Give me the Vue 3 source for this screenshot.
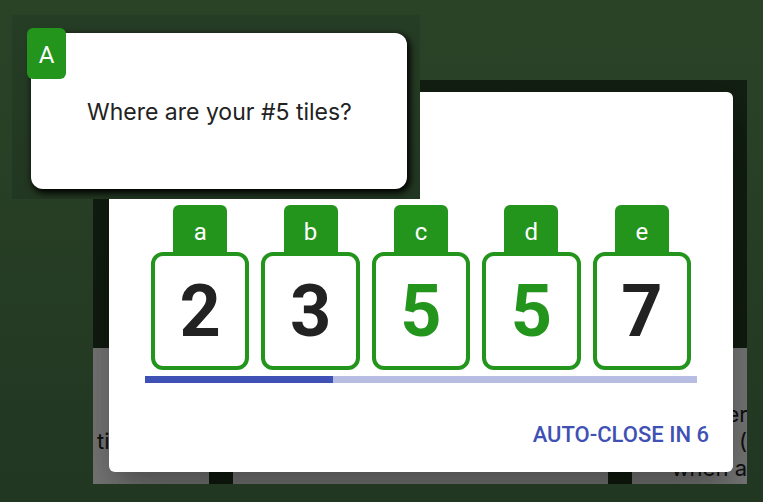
<script setup>
import { ref } from 'vue'

const tiles = [
  { slot: 'a', value: 2 },
  { slot: 'b', value: 3 },
  { slot: 'c', value: 5 },
  { slot: 'd', value: 5 },
  { slot: 'e', value: 7 },
]
const asked = 5
const seconds = ref(6)
const progress = ref(34)
</script>

<template>
  <main class="page">
    <section class="scene">
      <div class="board">
        <article class="board-card left"><p>ti</p></article>
        <article class="board-card"></article>
        <article class="board-card right">
          <p class="overhang">ere</p>
          <p>(</p>
          <p>when a</p>
        </article>
      </div>
      <div class="shade"></div>
      <div class="dialog" role="dialog" aria-label="Answer">
        <ul class="tiles">
          <li v-for="tile in tiles" :key="tile.slot" class="tile">
            <span class="tab">{{ tile.slot }}</span>
            <strong class="face" :class="{ match: tile.value === asked }">{{ tile.value }}</strong>
          </li>
        </ul>
        <div class="track" role="progressbar" aria-label="Time elapsed" :aria-valuenow="progress">
          <div class="bar" :style="{ width: progress + '%' }"></div>
        </div>
        <footer class="actions">
          <button type="button" class="close">AUTO-CLOSE IN {{ seconds }}</button>
        </footer>
      </div>
    </section>

    <aside class="question">
      <div class="question-card">
        <span class="badge">A</span>
        <p>Where are your #5 tiles?</p>
      </div>
    </aside>
  </main>
</template>

<style>
body {
  margin: 0;
  background: #233822;
}
</style>

<style scoped>
.page {
  position: relative;
  box-sizing: border-box;
  min-height: 100vh;
  padding: 80px 16px 18px 93px;
  background: linear-gradient(#2a4226, #284026 30%, #233822 85%, #223721);
  color: #222;
  font-family: Roboto, "Liberation Sans", sans-serif;
  font-size: 24px;
  line-height: 28px;
}

p {
  margin: 0;
}

.scene {
  display: grid;
  overflow: hidden;
}

.scene > * {
  grid-area: 1 / 1;
}

.board {
  display: grid;
  grid-template-columns: 116px 1fr 115px;
  column-gap: 24px;
  padding-top: 268px;
  background: linear-gradient(#284026, #223721);
}

.board-card {
  overflow: hidden;
  background: #f4f4f4;
  font-family: Inter, Roboto, sans-serif;
  font-size: 22px;
  line-height: 27px;
  white-space: nowrap;
}

.left {
  padding: 80px 0 0 4px;
}

.right {
  padding-top: 53px;
  text-align: right;
}

.overhang {
  margin-right: -13px;
}

.shade {
  background: rgba(0, 0, 0, 0.5);
}

.dialog {
  display: flex;
  flex-direction: column;
  margin: 12px 14px 12px 16px;
  padding: 113px 36px 12px;
  border-radius: 6px;
  background: #fff;
  box-shadow: 0 16px 22px -10px rgba(0, 0, 0, 0.2), 0 36px 57px 4px rgba(0, 0, 0, 0.14), 0 14px 69px 12px rgba(0, 0, 0, 0.12);
}

.tiles {
  display: grid;
  grid-template-columns: repeat(5, 1fr);
  margin: 0;
  padding: 0;
  list-style: none;
}

.tile {
  display: flex;
  flex-direction: column;
  align-items: center;
  padding: 0 6px;
}

.tab {
  width: 54px;
  padding: 13px 0 6px;
  border-radius: 6px 6px 0 0;
  background: #23941c;
  color: #fff;
  text-align: center;
}

.face {
  box-sizing: border-box;
  width: 100%;
  padding: 18px 0 16px;
  border: 4px solid #23941c;
  border-radius: 12px;
  font-size: 72px;
  line-height: 76px;
  text-align: center;
}

.match {
  color: #23941c;
}

.track {
  height: 7px;
  margin-top: 6px;
  background: #b6bce2;
}

.bar {
  height: 100%;
  background: #3f51b5;
}

.actions {
  display: flex;
  justify-content: flex-end;
  margin: 26px -24px 0 0;
}

.close {
  padding: 12px 12px 11px;
  border: 0;
  border-radius: 6px;
  background: none;
  color: #3f51b5;
  font: 500 22px/28px Roboto, "Liberation Sans", sans-serif;
}

.question {
  position: absolute;
  top: 15px;
  left: 12px;
  padding: 18px 13px 10px 19px;
  overflow: hidden;
  background: linear-gradient(#263d25, #223721);
}

.question-card {
  position: relative;
  padding: 65px 55px 63px 56px;
  border-radius: 12px;
  background: #fff;
  box-shadow: 2px 3px 7px 1px #000;
  font-family: Inter, Roboto, sans-serif;
  font-size: 23px;
}

.badge {
  position: absolute;
  top: -5px;
  left: -4px;
  width: 39px;
  padding: 13px 0 10px;
  border-radius: 6px;
  background: #23941c;
  color: #fff;
  font-family: Roboto, "Liberation Sans", sans-serif;
  font-size: 24px;
  text-align: center;
}
</style>
